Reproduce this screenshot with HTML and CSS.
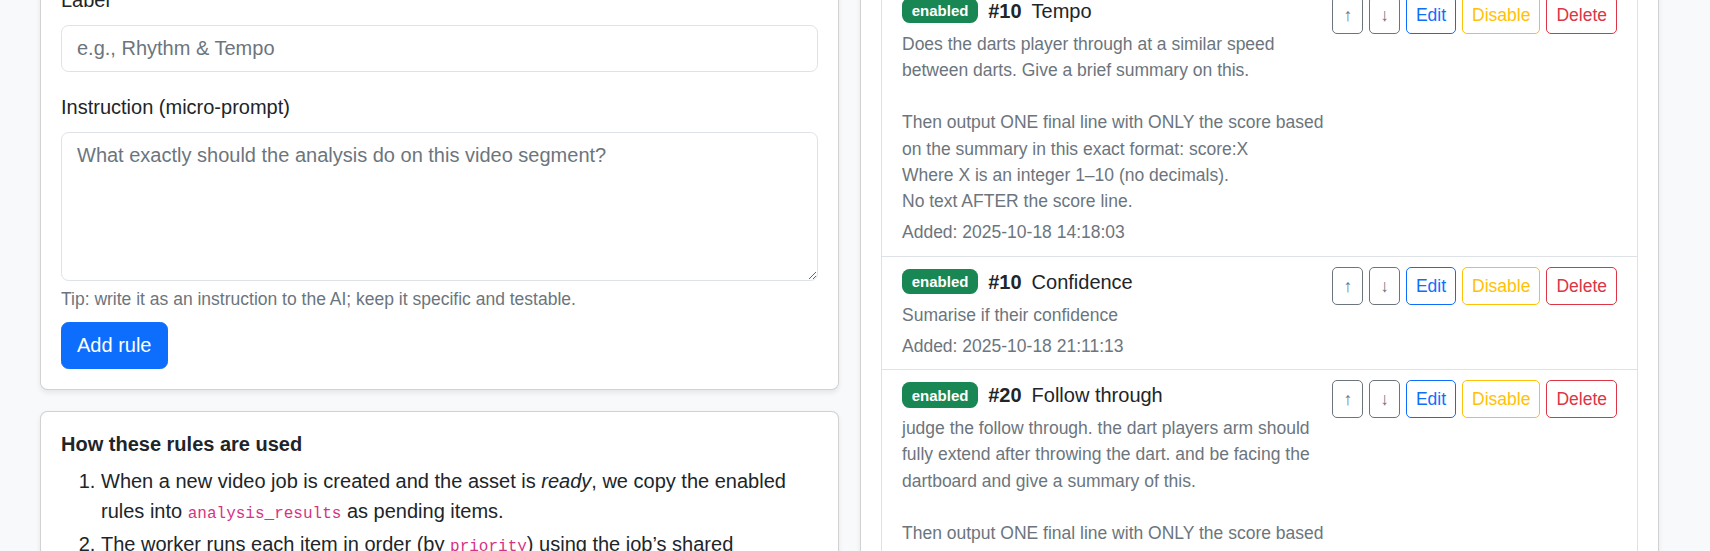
FILE: index.html
```html
<!DOCTYPE html>
<html lang="en">
<head>
    <meta charset="UTF-8">
    <title>Analysis rules</title>
    <link rel="stylesheet" href="styles.css">
</head>
<body>
    <div class="page">
        <!-- left: new rule form + help -->
        <div class="side">
            <div class="card">
                <div class="card-body">
                    <div class="field">
                        <label class="form-label">Priority</label>
                        <input class="form-control" type="number" value="10">
                    </div>
                    <div class="field">
                        <label class="form-label">Label</label>
                        <input class="form-control" type="text" placeholder="e.g., Rhythm &amp; Tempo">
                    </div>
                    <div class="field tight">
                        <label class="form-label">Instruction (micro-prompt)</label>
                        <textarea class="form-control prompt" placeholder="What exactly should the analysis do on this video segment?"></textarea>
                        <div class="form-text">Tip: write it as an instruction to the AI; keep it specific and testable.</div>
                    </div>
                    <button class="btn btn-primary">Add rule</button>
                </div>
            </div>
            <div class="card">
                <div class="card-body">
                    <h6 class="help-title">How these rules are used</h6>
                    <ol class="help-list">
                        <li>When a new video job is created and the asset is <i>ready</i>, we copy the enabled rules into <code>analysis_results</code> as pending items.</li>
                        <li>The worker runs each item in order (by <code>priority</code>) using the job’s shared <code>video_context</code> and stores the answer.</li>
                        <li>The final line of each answer is parsed as the score.</li>
                    </ol>
                </div>
            </div>
        </div>

        <!-- right: rule list -->
        <div class="card">
            <div class="card-body">
                <div class="rules-head">
                    <h5 class="rules-title">Rules</h5>
                    <span class="muted small">3 rules</span>
                </div>
                <div class="field">
                    <input class="form-control" type="text" placeholder="Filter rules…">
                </div>
                <ul class="list-group">
                    <li class="rule">
                        <div class="rule-main">
                            <div class="rule-title">
                                <span class="badge">enabled</span>
                                <strong class="rule-prio">#10</strong>
                                <span>Tempo</span>
                            </div>
                            <div class="rule-desc">Does the darts player through at a similar speed
between darts. Give a brief summary on this.

Then output ONE final line with ONLY the score based
on the summary in this exact format: score:X
Where X is an integer 1–10 (no decimals).
No text AFTER the score line.</div>
                            <div class="rule-date">Added: 2025-10-18 14:18:03</div>
                        </div>
                        <div class="rule-actions">
                            <button class="btn btn-sm btn-outline-secondary">↑</button>
                            <button class="btn btn-sm btn-outline-secondary">↓</button>
                            <button class="btn btn-sm btn-outline-primary">Edit</button>
                            <button class="btn btn-sm btn-outline-warning">Disable</button>
                            <button class="btn btn-sm btn-outline-danger">Delete</button>
                        </div>
                    </li>
                    <li class="rule">
                        <div class="rule-main">
                            <div class="rule-title">
                                <span class="badge">enabled</span>
                                <strong class="rule-prio">#10</strong>
                                <span>Confidence</span>
                            </div>
                            <div class="rule-desc">Sumarise if their confidence</div>
                            <div class="rule-date">Added: 2025-10-18 21:11:13</div>
                        </div>
                        <div class="rule-actions">
                            <button class="btn btn-sm btn-outline-secondary">↑</button>
                            <button class="btn btn-sm btn-outline-secondary">↓</button>
                            <button class="btn btn-sm btn-outline-primary">Edit</button>
                            <button class="btn btn-sm btn-outline-warning">Disable</button>
                            <button class="btn btn-sm btn-outline-danger">Delete</button>
                        </div>
                    </li>
                    <li class="rule">
                        <div class="rule-main">
                            <div class="rule-title">
                                <span class="badge">enabled</span>
                                <strong class="rule-prio">#20</strong>
                                <span>Follow through</span>
                            </div>
                            <div class="rule-desc">judge the follow through. the dart players arm should fully extend after throwing the dart. and be facing the dartboard and give a summary of this.

Then output ONE final line with ONLY the score based
on the summary in this exact format: score:X
Where X is an integer 1–10 (no decimals).
No text AFTER the score line.</div>
                            <div class="rule-date">Added: 2025-10-18 21:14:40</div>
                        </div>
                        <div class="rule-actions">
                            <button class="btn btn-sm btn-outline-secondary">↑</button>
                            <button class="btn btn-sm btn-outline-secondary">↓</button>
                            <button class="btn btn-sm btn-outline-primary">Edit</button>
                            <button class="btn btn-sm btn-outline-warning">Disable</button>
                            <button class="btn btn-sm btn-outline-danger">Delete</button>
                        </div>
                    </li>
                </ul>
            </div>
        </div>
    </div>
</body>
</html>
```
FILE: styles.css
```css
* {
    box-sizing: border-box;
}
body {
    margin: 0;
    background-color: #f8f9fa;
    color: #212529;
    font-family: "Liberation Sans", Arial, sans-serif;
    font-size: 20px;
    line-height: 30px;
}
/* page is scrolled: top of both cards is above the window */
.page {
    display: grid;
    grid-template-columns: 799px 799px;
    gap: 21px;
    align-items: start;
    margin-top: -143.5px;
    padding-left: 40px;
}
.side {
    display: flex;
    flex-direction: column;
    gap: 21px;
}
.card {
    background-color: #fff;
    border: 1px solid rgba(0, 0, 0, 0.175);
    border-radius: 7.5px;
    box-shadow: 0 2.5px 5px rgba(0, 0, 0, 0.075);
}
.card-body {
    padding: 20px;
}
.field {
    margin-bottom: 20px;
}
.field.tight {
    margin-bottom: 0;
}
.form-label {
    display: block;
    margin-bottom: 10px;
}
.form-control {
    display: block;
    width: 100%;
    padding: 7.5px 15px;
    font: inherit;
    line-height: 30px;
    color: #212529;
    background-color: #fff;
    border: 1px solid #dee2e6;
    border-radius: 7.5px;
}
.form-control::placeholder {
    color: #6c757d;
}
.prompt {
    height: 149px;
    resize: vertical;
}
.form-text {
    margin-top: 5px;
    font-size: 17.5px;
    line-height: 26.25px;
    color: #6c757d;
}
.btn {
    display: inline-block;
    font: inherit;
    padding: 7.5px 15px;
    line-height: 30px;
    border: 1px solid transparent;
    border-radius: 7.5px;
    background-color: transparent;
    cursor: pointer;
}
.btn-primary {
    margin-top: 10px;
    color: #fff;
    background-color: #0d6efd;
    border-color: #0d6efd;
}
.btn-sm {
    padding: 5px 9px;
    font-size: 17.5px;
    line-height: 26px;
    border-radius: 5px;
}
.btn-outline-secondary {
    padding: 5px 10px;
    color: #6c757d;
    border-color: #6c757d;
}
.btn-outline-primary {
    color: #0d6efd;
    border-color: #0d6efd;
}
.btn-outline-warning {
    color: #ffc107;
    border-color: #ffc107;
}
.btn-outline-danger {
    color: #dc3545;
    border-color: #dc3545;
}
.help-title {
    margin: 0 0 10px;
    font-size: 20px;
    line-height: 24px;
    font-weight: 700;
}
.help-list {
    margin: 0 0 20px;
    padding-left: 40px;
}
code {
    font-family: "Liberation Mono", monospace;
    font-size: 16px;
    color: #d63384;
}
.rules-head {
    display: flex;
    justify-content: space-between;
    align-items: center;
    margin-bottom: 10px;
}
.rules-title {
    margin: 0;
    font-size: 25px;
    line-height: 30px;
}
.muted {
    color: #6c757d;
}
.small {
    font-size: 17.5px;
}
.list-group {
    list-style: none;
    margin: 0;
    padding: 0;
    border: 1px solid #dee2e6;
    border-radius: 7.5px;
}
.rule {
    display: flex;
    gap: 8px;
    padding: 10px 20px;
    border-bottom: 1px solid #dee2e6;
}
.rule:last-child {
    border-bottom: none;
}
.rule-main {
    flex: 1;
    min-width: 0;
}
.rule-title {
    display: flex;
    align-items: center;
}
.badge {
    display: inline-block;
    margin-right: 10px;
    padding: 5.25px 9.75px;
    font-size: 15px;
    line-height: 1;
    font-weight: 700;
    color: #fff;
    background-color: #198754;
    border-radius: 7.5px;
}
.rule-prio {
    margin-right: 10px;
}
.rule-desc,
.rule-date {
    margin-top: 5px;
    font-size: 17.5px;
    line-height: 26.25px;
    color: #6c757d;
}
.rule-desc {
    white-space: pre-line;
}
.rule-actions {
    display: flex;
    gap: 6px;
    align-items: flex-start;
    flex: none;
}
```
